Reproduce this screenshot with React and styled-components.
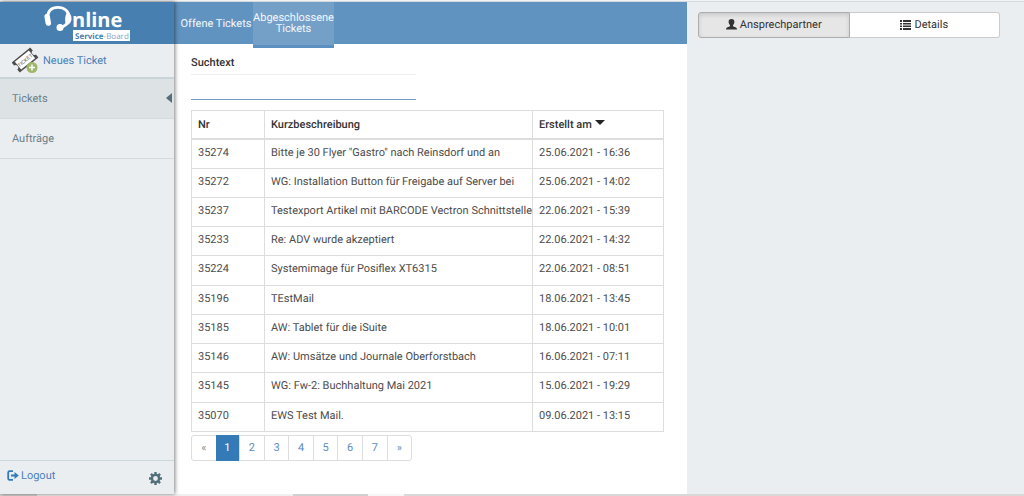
import React from "react";
import styled, { createGlobalStyle } from "styled-components";

const GlobalStyle = createGlobalStyle`
  *, *::before, *::after { box-sizing: border-box; }
  body {
    margin: 0;
    font-family: Roboto, "Liberation Sans", sans-serif;
    font-size: 11px;
    line-height: 15px;
    color: #4c4c4c;
    background: #fff;
    text-rendering: geometricPrecision;
  }
  button, input { font: inherit; color: inherit; text-rendering: inherit; }
  a { text-decoration: none; }
`;

const Page = styled.div`
  min-height: 100vh;
  display: flex;
  flex-direction: column;
`;

const TopEdge = styled.div`
  height: 2px;
  background: linear-gradient(#f3f3f3 50%, #d3d9dc 50%);
`;

const BottomEdge = styled.div`
  height: 2px;
  background: linear-gradient(90deg, #d0d0d0 37px, #efefef 37px, #efefef 293px, #d0d0d0 293px, #d0d0d0 368px, #f6f6f6 368px, #f6f6f6 404px, #d8d8d8 404px);
`;

const Columns = styled.div`
  flex: 1;
  display: grid;
  grid-template-columns: 174px minmax(0, 513fr) minmax(0, 337fr);
`;

const Sidebar = styled.aside`
  position: relative;
  display: flex;
  flex-direction: column;
  background: #eaeef1;
  box-shadow: 1px 0 4px rgba(0, 0, 0, 0.5);
`;

const Brand = styled.div`
  height: 42px;
  display: flex;
  justify-content: center;
  background: #487fb1;
`;

const NewTicket = styled.a`
  height: 35px;
  padding: 0 0 1px 12px;
  display: flex;
  align-items: center;
  gap: 4px;
  color: #4a80b8;
  border-bottom: 2px solid #c9d4d8;
`;

const NavItem = styled.a`
  height: 40px;
  padding: 0 2px 1px 12px;
  display: flex;
  align-items: center;
  justify-content: space-between;
  color: #6b7f88;
  background: ${(p) => (p.$active ? "#dde2e5" : "transparent")};
  border-bottom: 1px solid #d3dbdf;
`;

const SidebarFooter = styled.div`
  height: 34px;
  margin-top: auto;
  padding: 0 12px 0 7px;
  display: flex;
  align-items: center;
  justify-content: space-between;
  border-top: 1px solid #ccd8dc;
`;

const Logout = styled.a`
  padding-bottom: 4px;
  display: flex;
  align-items: center;
  gap: 2px;
  color: #4a80b8;
`;

const IconButton = styled.button`
  padding: 2px 0 0;
  border: 0;
  background: none;
  display: flex;
  color: #546e7a;
`;

const Main = styled.main`
  min-width: 0;
  background: #fff;
`;

const Tabs = styled.nav`
  height: 42px;
  padding-left: 5px;
  display: flex;
  background: #6193c1;
`;

const Tab = styled.a`
  width: ${(p) => (p.$active ? 81 : 74)}px;
  height: ${(p) => (p.$active ? 46 : 42)}px;
  padding-bottom: ${(p) => (p.$active ? 2 : 0)}px;
  display: flex;
  align-items: center;
  justify-content: center;
  text-align: center;
  line-height: 11px;
  color: #f2f7fb;
  background: ${(p) => (p.$active ? "#74a0c8" : "transparent")};
  border-bottom: ${(p) => (p.$active ? "3px solid #5b90c1" : "0")};
`;

const Content = styled.div`
  padding: 11px 23px 20px 17px;
`;

const SearchField = styled.div`
  width: 225px;
  margin-bottom: 10px;
  display: flex;
  flex-direction: column;
  gap: 4px;
`;

const Label = styled.label`
  font-weight: 500;
  color: #333;
`;

const SearchInput = styled.input`
  width: 100%;
  height: 26px;
  padding: 2px 0;
  border: 0;
  border-top: 1px solid #eee;
  border-bottom: 1px solid #6f9ccc;
  border-radius: 0;
  outline: 0;
  background: transparent;
`;

const Table = styled.table`
  width: 100%;
  height: 322px;
  table-layout: fixed;
  border-collapse: collapse;
`;

const Col = styled.col`
  width: ${(p) => p.$width};
`;

const HeadCell = styled.th`
  height: 28px;
  padding: 6px 0 5px 6px;
  text-align: left;
  vertical-align: top;
  font-weight: 500;
  color: #333;
  border: 1px solid #ddd;
  border-bottom-width: 2px;
`;

const Cell = styled.td`
  padding: 5px 0 8px 6px;
  vertical-align: top;
  white-space: nowrap;
  border: 1px solid #ddd;
`;

const SortIcon = styled.svg`
  margin-left: 3px;
  vertical-align: 3px;
`;

const Pagination = styled.nav`
  width: 221px;
  height: 26px;
  margin-top: 3px;
  display: flex;
  border: 1px solid #ddd;
  border-radius: 3px;
`;

const PageButton = styled.button`
  flex: 1;
  margin: ${(p) => (p.$active ? "-1px 0" : "0")};
  padding: 0 0 1px;
  border: 0;
  border-left: ${(p) => (p.$first || p.$active ? "0" : "1px solid #ddd")};
  background: ${(p) => (p.$active ? "#337ab7" : "transparent")};
  color: ${(p) => (p.$active ? "#fff" : p.$muted ? "#888" : "#5b8ac0")};
`;

const Panel = styled.section`
  padding: 10px 24px 10px 11px;
  background: #eaeef1;
`;

const ButtonGroup = styled.div`
  display: flex;
`;

const GroupButton = styled.button`
  flex: 1;
  height: 26px;
  padding: 0 0 1px;
  display: flex;
  align-items: center;
  justify-content: center;
  gap: 3px;
  color: #333;
  background: ${(p) => (p.$active ? "#e6e6e6" : "#fff")};
  border: 1px solid ${(p) => (p.$active ? "#adadad" : "#ccc")};
  border-radius: ${(p) => (p.$active ? "3px 0 0 3px" : "0 3px 3px 0")};
  border-left-width: ${(p) => (p.$active ? "1px" : "0")};
  box-shadow: ${(p) => (p.$active ? "inset 0 2px 4px rgba(0, 0, 0, 0.13)" : "none")};
`;

const Logo = () => (
  <svg width="90" height="42" viewBox="0 0 90 42" role="img" aria-label="Online Service-Board">
    <path d="M5.500 15C6 8.500 10 5.300 16 5.300S27 9 27.500 16C27.800 20.500 24.500 23 19.500 25.500" fill="none" stroke="#fff" strokeWidth="2.800" />
    <rect x="3" y="12" width="5.500" height="12" rx="2.700" fill="#fff" transform="rotate(-10 5 18)" />
    <path d="M24.500 11Q29.500 11 29.500 16.500T24 23Q22 17 24.500 11Z" fill="#fff" />
    <circle cx="18" cy="25.500" r="3.500" fill="#fff" />
    <text x="30" y="25" fill="#fff" fontFamily="Open Sans, sans-serif" fontSize="20" fontWeight="700">nline</text>
    <rect x="31" y="28" width="57" height="11" fill="#fff" />
    <text x="33" y="37" fill="#487fb1" fontFamily="Open Sans, sans-serif" fontSize="8">
      <tspan fontWeight="700">Service</tspan><tspan fill="#7fa5c9">-Board</tspan>
    </text>
  </svg>
);

const TicketIcon = () => (
  <svg width="27" height="27" viewBox="0 0 27 27" aria-hidden="true">
    <g transform="rotate(-39 13 13)">
      <path d="M1 6.500H25V10.500A2.500 2.500 0 0 0 25 15.500V19.500H1V15.500A2.500 2.500 0 0 0 1 10.500Z" fill="#4d4d4d" />
      <rect x="4" y="8" width="18" height="10" fill="#fff" />
      <text x="4" y="15" fontSize="5" fontFamily="Liberation Sans, sans-serif" fill="#444">TICKET</text>
    </g>
    <circle cx="20" cy="20.500" r="5.500" fill="#9db668" />
    <path d="M20 17.500V23.500M17 20.500H23" stroke="#fff" strokeWidth="1.500" />
  </svg>
);

const LogoutIcon = () => (
  <svg width="12" height="11" viewBox="0 0 12 11" aria-hidden="true">
    <path d="M6 1.200H2.500Q1.200 1.200 1.200 2.500V8.500Q1.200 9.800 2.500 9.800H6" fill="none" stroke="#337ab7" strokeWidth="1.800" />
    <path d="M4 4.500H7.500V2L11.800 5.500L7.500 9V6.500H4Z" fill="#337ab7" />
  </svg>
);

const GearIcon = () => (
  <svg width="13" height="13" viewBox="0 0 13 13" aria-hidden="true">
    <circle cx="6.500" cy="6.500" r="3.600" fill="none" stroke="currentColor" strokeWidth="2.400" />
    {[0, 45, 90, 135].map((a) => (
      <path key={a} d="M5.300 0H7.700V2.500H5.300ZM5.300 10.500H7.700V13H5.300Z" fill="currentColor" transform={`rotate(${a} 6.500 6.500)`} />
    ))}
  </svg>
);

const PersonIcon = () => (
  <svg width="11" height="11" viewBox="0 0 11 11" aria-hidden="true">
    <path d="M5.500 0C7.500 0 8.500 1.200 8.400 3C8.300 4.500 7.600 5.500 7 6.200V7.200L10 8.400Q11 8.900 11 10.500H0Q0 8.900 1 8.400L4 7.200V6.200C3.400 5.500 2.700 4.500 2.600 3C2.500 1.200 3.500 0 5.500 0Z" fill="#333" />
  </svg>
);

const ListIcon = () => (
  <svg width="11" height="10" viewBox="0 0 11 10" aria-hidden="true">
    <path d="M0 0H2V2H0ZM3 0H11V2H3ZM0 3H2V4.500H0ZM3 3H11V4.500H3ZM0 5.500H2V7H0ZM3 5.500H11V7H3ZM0 8H2V10H0ZM3 8H11V10H3Z" fill="#333" />
  </svg>
);

const tickets = [
  ["35274", 'Bitte je 30 Flyer "Gastro" nach Reinsdorf und an', "25.06.2021 - 16:36"],
  ["35272", "WG: Installation Button für Freigabe auf Server bei", "25.06.2021 - 14:02"],
  ["35237", "Testexport Artikel mit BARCODE Vectron Schnittstelle", "22.06.2021 - 15:39"],
  ["35233", "Re: ADV wurde akzeptiert", "22.06.2021 - 14:32"],
  ["35224", "Systemimage für Posiflex XT6315", "22.06.2021 - 08:51"],
  ["35196", "TEstMail", "18.06.2021 - 13:45"],
  ["35185", "AW: Tablet für die iSuite", "18.06.2021 - 10:01"],
  ["35146", "AW: Umsätze und Journale Oberforstbach", "16.06.2021 - 07:11"],
  ["35145", "WG: Fw-2: Buchhaltung Mai 2021", "15.06.2021 - 19:29"],
  ["35070", "EWS Test Mail.", "09.06.2021 - 13:15"],
];

const pages = ["«", "1", "2", "3", "4", "5", "6", "7", "»"];

export default function App() {
  return (
    <Page>
      <GlobalStyle />
      <TopEdge />
      <Columns>
        <Sidebar>
          <Brand><Logo /></Brand>
          <NewTicket href="#neu"><TicketIcon />Neues Ticket</NewTicket>
          <NavItem href="#tickets" $active>
            Tickets
            <svg width="6" height="10" viewBox="0 0 6 10" aria-hidden="true"><path d="M6 0V10L0 5Z" fill="#546e7a" /></svg>
          </NavItem>
          <NavItem href="#auftraege">Aufträge</NavItem>
          <SidebarFooter>
            <Logout href="#logout"><LogoutIcon />Logout</Logout>
            <IconButton type="button" aria-label="Einstellungen"><GearIcon /></IconButton>
          </SidebarFooter>
        </Sidebar>
        <Main>
          <Tabs>
            <Tab href="#offen">Offene Tickets</Tab>
            <Tab href="#abgeschlossen" $active>Abgeschlossene Tickets</Tab>
          </Tabs>
          <Content>
            <SearchField>
              <Label htmlFor="suche">Suchtext</Label>
              <SearchInput id="suche" type="text" />
            </SearchField>
            <Table>
              <colgroup>
                <Col $width="73px" />
                <Col $width="auto" />
                <Col $width="131px" />
              </colgroup>
              <thead>
                <tr>
                  <HeadCell>Nr</HeadCell>
                  <HeadCell>Kurzbeschreibung</HeadCell>
                  <HeadCell>
                    Erstellt am
                    <SortIcon width="10" height="5" viewBox="0 0 10 5" aria-hidden="true"><path d="M0 0H10L5 5Z" fill="#222" /></SortIcon>
                  </HeadCell>
                </tr>
              </thead>
              <tbody>
                {tickets.map(([nr, text, date]) => (
                  <tr key={nr}>
                    <Cell>{nr}</Cell>
                    <Cell>{text}</Cell>
                    <Cell>{date}</Cell>
                  </tr>
                ))}
              </tbody>
            </Table>
            <Pagination aria-label="Seiten">
              {pages.map((p, i) => (
                <PageButton key={p} type="button" $first={i === 0} $active={p === "1"} $muted={i === 0}>{p}</PageButton>
              ))}
            </Pagination>
          </Content>
        </Main>
        <Panel>
          <ButtonGroup>
            <GroupButton type="button" $active><PersonIcon />Ansprechpartner</GroupButton>
            <GroupButton type="button"><ListIcon />Details</GroupButton>
          </ButtonGroup>
        </Panel>
      </Columns>
      <BottomEdge />
    </Page>
  );
}
